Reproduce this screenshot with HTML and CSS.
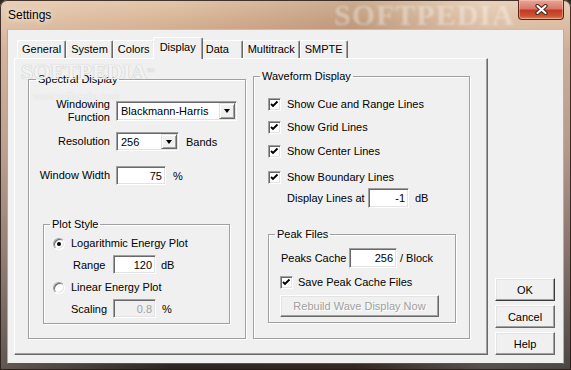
FILE: index.html
```html
<!DOCTYPE html>
<html>
<head>
    <title>Settings</title>
    <link rel="stylesheet" href="styles.css">
</head>
<body>

<div class="window">
    <div class="titlebar">
        <span class="title">Settings</span>
        <span class="brand-mark">SOFTPEDIA</span>
        <button class="close-btn" title="Close">
            <svg width="13" height="11" viewBox="0 0 13 11">
                <path d="M2.5 2 L10.5 9 M10.5 2 L2.5 9" stroke="#4a2219" stroke-width="4.2" stroke-linecap="round"/>
                <path d="M2.5 2 L10.5 9 M10.5 2 L2.5 9" stroke="#fff" stroke-width="2.2" stroke-linecap="round"/>
            </svg>
        </button>
    </div>

    <div class="client">
        <div class="tabs">
            <div class="tab-strip">
                <span class="tab">General</span>
                <span class="tab">System</span>
                <span class="tab">Colors</span>
                <span class="tab active">Display</span>
                <span class="tab tab-data">Data</span>
                <span class="tab">Multitrack</span>
                <span class="tab">SMPTE</span>
            </div>

            <div class="tab-panel">
                <!-- watermark left on the screenshot -->
                <span class="panel-mark">SOFTPEDIA<sup>™</sup></span>
                <span class="panel-url">www.softpedia.com</span>

                <fieldset class="group spectral">
                    <legend>Spectral Display</legend>

                    <div class="spec-row row-windowing">
                        <span class="spec-label">Windowing<br>Function</span>
                        <div class="combo combo-windowing">
                            <span class="combo-value">Blackmann-Harris</span>
                            <span class="combo-btn"><i class="arrow"></i></span>
                        </div>
                    </div>

                    <div class="spec-row row-resolution">
                        <span class="spec-label">Resolution</span>
                        <div class="combo combo-resolution">
                            <span class="combo-value">256</span>
                            <span class="combo-btn"><i class="arrow"></i></span>
                        </div>
                        <span class="unit unit-bands">Bands</span>
                    </div>

                    <div class="spec-row row-width">
                        <span class="spec-label">Window Width</span>
                        <span class="field field-width">75</span>
                        <span class="unit unit-pct">%</span>
                    </div>

                    <fieldset class="group plot-style">
                        <legend>Plot Style</legend>

                        <div class="option-row row-log">
                            <span class="radio checked"></span>
                            <span class="option-text">Logarithmic Energy Plot</span>
                        </div>
                        <div class="value-row row-range">
                            <span class="value-label label-range">Range</span>
                            <span class="field field-small">120</span>
                            <span class="unit unit-db">dB</span>
                        </div>
                        <div class="option-row row-linear">
                            <span class="radio"></span>
                            <span class="option-text">Linear Energy Plot</span>
                        </div>
                        <div class="value-row row-scaling">
                            <span class="value-label label-scaling">Scaling</span>
                            <span class="field field-small disabled">0.8</span>
                            <span class="unit unit-scale">%</span>
                        </div>
                    </fieldset>
                </fieldset>

                <fieldset class="group waveform">
                    <legend>Waveform Display</legend>

                    <div class="check-row row-cue">
                        <span class="checkbox checked"><svg width="9" height="9" viewBox="0 0 9 9"><polyline points="1,4 3,6 7.5,1.5" fill="none" stroke="#000" stroke-width="1.9"/></svg></span>
                        <span class="check-text">Show Cue and Range Lines</span>
                    </div>
                    <div class="check-row row-grid">
                        <span class="checkbox checked"><svg width="9" height="9" viewBox="0 0 9 9"><polyline points="1,4 3,6 7.5,1.5" fill="none" stroke="#000" stroke-width="1.9"/></svg></span>
                        <span class="check-text">Show Grid Lines</span>
                    </div>
                    <div class="check-row row-center">
                        <span class="checkbox checked"><svg width="9" height="9" viewBox="0 0 9 9"><polyline points="1,4 3,6 7.5,1.5" fill="none" stroke="#000" stroke-width="1.9"/></svg></span>
                        <span class="check-text">Show Center Lines</span>
                    </div>
                    <div class="check-row row-boundary">
                        <span class="checkbox checked"><svg width="9" height="9" viewBox="0 0 9 9"><polyline points="1,4 3,6 7.5,1.5" fill="none" stroke="#000" stroke-width="1.9"/></svg></span>
                        <span class="check-text">Show Boundary Lines</span>
                    </div>
                    <div class="display-row">
                        <span class="display-label">Display Lines at</span>
                        <span class="field field-lines">-1</span>
                        <span class="unit unit-lines">dB</span>
                    </div>

                    <fieldset class="group peak-files">
                        <legend>Peak Files</legend>

                        <div class="peak-row">
                            <span class="peak-label">Peaks Cache</span>
                            <span class="field field-peaks">256</span>
                            <span class="unit unit-block">/ Block</span>
                        </div>
                        <div class="check-row row-save">
                            <span class="checkbox checked"><svg width="9" height="9" viewBox="0 0 9 9"><polyline points="1,4 3,6 7.5,1.5" fill="none" stroke="#000" stroke-width="1.9"/></svg></span>
                            <span class="save-text">Save Peak Cache Files</span>
                        </div>
                        <button class="btn btn-rebuild" disabled>Rebuild Wave Display Now</button>
                    </fieldset>
                </fieldset>
            </div>
        </div>

        <div class="dialog-buttons">
            <button class="btn btn-dialog btn-default">OK</button>
            <button class="btn btn-dialog">Cancel</button>
            <button class="btn btn-dialog">Help</button>
        </div>
    </div>
</div>

</body>
</html>
```

FILE: styles.css
```css
* {
    box-sizing: border-box;
}

body {
    margin: 0;
    font-family: "Liberation Sans", Arial, sans-serif;
    font-size: 11px;
    color: #000;
    background: #2b2523;
}

/* Aero window frame */
.window {
    width: 571px;
    height: 370px;
    display: flex;
    flex-direction: column;
    padding: 0 7px 6px 7px;
    border-radius: 7px 7px 0 0;
    overflow: hidden;
    box-shadow: inset 0 0 0 1px rgba(40, 25, 20, 0.85);
    background:
        linear-gradient(90deg, rgba(255, 240, 225, 0.25) 0, rgba(255, 240, 225, 0) 30%, rgba(90, 50, 25, 0.18) 62%, rgba(255, 255, 255, 0.2) 85%, rgba(255, 255, 255, 0.15) 100%),
        linear-gradient(180deg, #e3c7ab 0, #d9b597 20px, #c6a086 50px, #a68776 150px, #6c5750 260px, #2a2422 370px);
}

.titlebar {
    position: relative;
    height: 29px;
    flex: none;
    display: flex;
    align-items: flex-start;
}

.title {
    margin: 7px 0 0 1px;
    font-size: 12px;
    line-height: 16px;
    text-shadow: 0 0 6px rgba(255, 255, 255, 0.9), 0 0 10px rgba(255, 255, 255, 0.6);
}

.brand-mark {
    position: absolute;
    left: 327px;
    top: 0;
    font-family: "Liberation Serif", serif;
    font-weight: bold;
    font-size: 30px;
    line-height: 30px;
    letter-spacing: 1px;
    color: rgba(255, 255, 255, 0.35);
    filter: blur(1px);
}

.close-btn {
    position: relative;
    margin-left: auto;
    width: 46px;
    height: 20px;
    padding: 0;
    display: flex;
    align-items: center;
    justify-content: center;
    border: 1px solid #5e2418;
    border-top: none;
    border-radius: 0 0 4px 4px;
    background: linear-gradient(180deg, #e8a797 0, #d7786a 45%, #c23a22 55%, #cc5436 85%, #e0865e 100%);
    box-shadow: inset 0 0 0 1px rgba(255, 210, 200, 0.45);
}

/* Dialog client area */
.client {
    height: 335px;
    flex: none;
    display: flex;
    padding: 6px 8px 8px 6px;
    background: #f0f0f0;
    border: 1px solid;
    border-color: #cbbdb1 #b9aca3 #5f534d #b8a89c;
}

.tabs {
    width: 474px;
    display: flex;
    flex-direction: column;
}

.tab-strip {
    height: 22px;
    display: flex;
    align-items: flex-end;
    padding-left: 3px;
}

.tab {
    height: 18px;
    line-height: 16px;
    padding: 0 4px;
    background: #f0f0f0;
    border: 1px solid #fff;
    border-bottom: none;
    border-right-color: #696969;
    border-radius: 2px 2px 0 0;
    box-shadow: inset -1px 0 0 #a0a0a0;
}

.tab.active {
    position: relative;
    z-index: 1;
    height: 22px;
    margin: 0 -2px -1px -2px;
    padding: 0 6px;
    line-height: 19px;
}

.tab-data {
    min-width: 42px;
}

.tab-panel {
    position: relative;
    flex: 1;
    display: flex;
    align-items: flex-start;
    padding-left: 13px;
    border: 1px solid;
    border-color: #fff #696969 #696969 #fff;
    box-shadow: inset -1px -1px 0 #a0a0a0;
}

.panel-mark {
    position: absolute;
    left: 6px;
    top: 2px;
    font-family: "Liberation Serif", serif;
    font-weight: bold;
    font-size: 22px;
    line-height: 22px;
    color: #f2f2f2;
    text-shadow: 0 0 1px #c6c6c6, 0 0 1px #c6c6c6;
}

.panel-mark sup {
    font-size: 8px;
    vertical-align: top;
}

.panel-url {
    position: absolute;
    left: 18px;
    top: 32px;
    font-size: 10px;
    color: #f4f4f4;
    text-shadow: 0 0 1px #cfcfcf;
}

/* Group boxes */
.group {
    margin: 0;
    padding: 0;
    min-width: 0;
    border: 1px solid #a0a0a0;
    box-shadow: 1px 1px 0 #fff, inset 1px 1px 0 #fff;
}

.group legend {
    padding: 0 2px;
    line-height: 13px;
    margin-left: 6px;
}

.spectral {
    width: 218px;
    height: 266px;
    margin-top: 14px;
}

.spectral > legend {
    margin-left: 7px;
}

.waveform {
    width: 217px;
    height: 269px;
    margin-top: 11px;
    margin-left: 7px;
}

.spec-row {
    display: flex;
    align-items: center;
}

.spec-label {
    width: 81px;
    margin-right: 6px;
    text-align: right;
    line-height: 13px;
}

.row-windowing {
    margin-top: 12px;
}

.row-resolution {
    margin-top: 8px;
}

.row-width {
    margin-top: 15px;
}

/* Sunken controls */
.combo,
.field,
.checkbox {
    background: #fff;
    border: 1px solid;
    border-color: #a0a0a0 #fff #fff #a0a0a0;
    box-shadow: inset 1px 1px 0 #696969, inset -1px -1px 0 #e3e3e3;
}

.combo {
    display: flex;
    align-items: center;
    height: 20px;
    padding: 1px;
}

.combo-value {
    flex: 1;
    padding-left: 3px;
}

.combo-windowing {
    width: 121px;
}

.combo-resolution {
    width: 63px;
    height: 19px;
}

.combo-btn {
    width: 16px;
    height: 100%;
    display: flex;
    align-items: center;
    justify-content: center;
    background: #f0f0f0;
    border: 1px solid;
    border-color: #e3e3e3 #696969 #696969 #e3e3e3;
    box-shadow: inset 1px 1px 0 #fff, inset -1px -1px 0 #a0a0a0;
}

.arrow {
    width: 0;
    height: 0;
    border-top: 4px solid #000;
    border-left: 3.5px solid transparent;
    border-right: 3.5px solid transparent;
}

.field {
    display: flex;
    align-items: center;
    justify-content: flex-end;
    height: 19px;
    padding-right: 3px;
}

.field.disabled {
    background: #f0f0f0;
    color: #a0a0a0;
}

.field-width {
    width: 50px;
}

.field-small {
    width: 43px;
}

.unit-bands {
    margin-left: 7px;
}

.unit-pct {
    margin-left: 7px;
}

/* Plot style box */
.plot-style {
    width: 187px;
    height: 106px;
    margin: 33px 0 0 14px;
}

.option-row {
    display: flex;
    align-items: center;
    height: 13px;
    padding-left: 9px;
}

.option-text {
    margin-left: 6px;
    line-height: 13px;
}

.radio {
    width: 12px;
    height: 12px;
    display: flex;
    align-items: center;
    justify-content: center;
    border-radius: 50%;
    background: #fff;
    border: 1px solid;
    border-color: #a0a0a0 #fff #fff #a0a0a0;
    box-shadow: inset 1px 1px 0 #696969, inset -1px -1px 0 #e3e3e3;
}

.radio.checked::after {
    content: "";
    width: 4px;
    height: 4px;
    border-radius: 50%;
    background: #000;
}

.row-log {
    margin-top: 6px;
}

.row-linear {
    margin-top: 7px;
}

.value-row {
    display: flex;
    align-items: center;
}

.row-range {
    margin: 5px 0 0 29px;
}

.row-scaling {
    margin: 5px 0 0 27px;
}

.label-range {
    width: 40px;
}

.label-scaling {
    width: 42px;
}

.unit-db {
    margin-left: 5px;
}

.unit-scale {
    margin-left: 6px;
}

/* Waveform box */
.check-row {
    display: flex;
    align-items: center;
    height: 13px;
    padding-left: 14px;
}

.checkbox {
    width: 13px;
    height: 13px;
    flex: none;
    display: flex;
    align-items: center;
    justify-content: center;
}

.check-text {
    margin-left: 6px;
    line-height: 13px;
}

.row-cue {
    margin-top: 15px;
}

.row-grid {
    margin-top: 10px;
}

.row-center {
    margin-top: 11px;
}

.row-boundary {
    margin-top: 13px;
}

.display-row {
    display: flex;
    align-items: center;
    margin: 4px 0 0 33px;
}

.display-label {
    width: 81px;
}

.field-lines {
    width: 41px;
    height: 20px;
}

.unit-lines {
    margin-left: 6px;
}

.peak-files {
    width: 188px;
    height: 95px;
    margin: 20px 0 0 14px;
}

.peak-row {
    display: flex;
    align-items: center;
    margin-top: 7px;
    padding-left: 12px;
}

.peak-label {
    width: 68px;
}

.field-peaks {
    width: 48px;
    height: 20px;
}

.unit-block {
    margin-left: 3px;
}

.row-save {
    margin-top: 8px;
    padding-left: 11px;
}

.save-text {
    margin-left: 5px;
    line-height: 13px;
}

/* Raised buttons */
.btn {
    display: block;
    padding: 0;
    font-family: inherit;
    font-size: 11px;
    color: #000;
    background: #f0f0f0;
    border: 1px solid;
    border-color: #fff #696969 #696969 #fff;
    box-shadow: inset -1px -1px 0 #a0a0a0, inset 1px 1px 0 #e3e3e3;
}

.btn-rebuild {
    width: 159px;
    height: 22px;
    margin: 6px 0 0 11px;
    color: #a0a0a0;
    text-shadow: 1px 1px 0 #fff;
}

.dialog-buttons {
    display: flex;
    flex-direction: column;
    justify-content: flex-end;
    gap: 4px;
    margin-left: 7px;
}

.btn-dialog {
    width: 60px;
    height: 23px;
}

.btn-default {
    border-color: #fff #3c3c3c #3c3c3c #fff;
}
```
